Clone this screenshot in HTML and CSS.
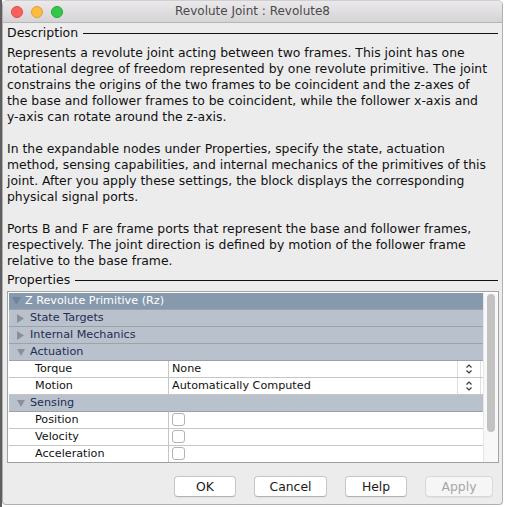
FILE: index.html
```html
<!DOCTYPE html>
<html>
<head>
<meta charset="utf-8">
<link rel="stylesheet" href="styles.css">
</head>
<body>
<div class="window">
  <div class="titlebar">
    <div class="lights">
      <span class="light red"></span><span class="light yellow"></span><span class="light green"></span>
    </div>
    <div class="title">Revolute Joint : Revolute8</div>
    <div></div>
  </div>
  <div class="content">
    <div class="legend">Description</div>
    <div class="desc">
      <p>Represents a revolute joint acting between two frames. This joint has one<br>rotational degree of freedom represented by one revolute primitive. The joint<br>constrains the origins of the two frames to be coincident and the z-axes of<br>the base and follower frames to be coincident, while the follower x-axis and<br>y-axis can rotate around the z-axis.</p>
      <p>In the expandable nodes under Properties, specify the state, actuation<br>method, sensing capabilities, and internal mechanics of the primitives of this<br>joint. After you apply these settings, the block displays the corresponding<br>physical signal ports.</p>
      <p>Ports B and F are frame ports that represent the base and follower frames,<br>respectively. The joint direction is defined by motion of the follower frame<br>relative to the base frame.</p>
    </div>
    <div class="legend props">Properties</div>
    <div class="table">
      <div class="rows">
        <div class="row head"><span class="tri"><svg width="9" height="8" viewBox="0 0 9 8"><path d="M0 0H9L4.5 8Z" fill="#71849a"/></svg></span>Z Revolute Primitive (Rz)</div>
        <div class="row group"><span class="tri"><svg width="7" height="9" viewBox="0 0 7 9"><path d="M0 0L7 4.5L0 9Z" fill="#8b9098"/></svg></span>State Targets</div>
        <div class="row group"><span class="tri"><svg width="7" height="9" viewBox="0 0 7 9"><path d="M0 0L7 4.5L0 9Z" fill="#8b9098"/></svg></span>Internal Mechanics</div>
        <div class="row group"><span class="tri"><svg width="8" height="7" viewBox="0 0 8 7"><path d="M0 0H8L4 7Z" fill="#8b9098"/></svg></span>Actuation</div>
        <div class="row leaf">
          <div class="label">Torque</div>
          <div class="value combo"><span>None</span><span class="spin"><svg width="8" height="12" viewBox="0 0 8 12"><path d="M1.5 4.5L4 2L6.5 4.5M1.5 7.5L4 10L6.5 7.5" fill="none" stroke="#3a3a3a" stroke-width="1.2"/></svg></span></div>
        </div>
        <div class="row leaf">
          <div class="label">Motion</div>
          <div class="value combo"><span>Automatically Computed</span><span class="spin"><svg width="8" height="12" viewBox="0 0 8 12"><path d="M1.5 4.5L4 2L6.5 4.5M1.5 7.5L4 10L6.5 7.5" fill="none" stroke="#3a3a3a" stroke-width="1.2"/></svg></span></div>
        </div>
        <div class="row group"><span class="tri"><svg width="8" height="7" viewBox="0 0 8 7"><path d="M0 0H8L4 7Z" fill="#8b9098"/></svg></span>Sensing</div>
        <div class="row leaf">
          <div class="label">Position</div>
          <div class="value"><span class="check"></span></div>
        </div>
        <div class="row leaf">
          <div class="label">Velocity</div>
          <div class="value"><span class="check"></span></div>
        </div>
        <div class="row leaf">
          <div class="label">Acceleration</div>
          <div class="value"><span class="check"></span></div>
        </div>
      </div>
      <div class="scrollbar"><div class="thumb"></div></div>
    </div>
    <div class="buttons">
      <button class="btn ok">OK</button>
      <button class="btn cancel">Cancel</button>
      <button class="btn help">Help</button>
      <button class="btn apply">Apply</button>
    </div>
  </div>
</div>
</body>
</html>
```
FILE: styles.css
```css
html, body {
  margin: 0;
  height: 507px;
  overflow: hidden;
}
body {
  background: linear-gradient(to right, #5f5f5f 0, #5f5f5f 2px, #ffffff 2px);
  font-family: "DejaVu Sans", "Liberation Sans", sans-serif;
}
.window {
  margin-left: 2px;
  width: 501px;
  height: 505px;
  box-sizing: border-box;
  border: 1px solid #b0b0b0;
  border-top-color: #cfcfcf;
  border-radius: 5px 5px 4px 4px;
  background: #ececec;
  overflow: hidden;
  display: flex;
  flex-direction: column;
}
.titlebar {
  height: 21px;
  border-bottom: 1px solid #b6b6b6;
  background: linear-gradient(#ebe9eb, #d5d3d5);
  display: grid;
  grid-template-columns: 1fr auto 1fr;
  align-items: center;
}
.lights {
  display: flex;
  gap: 8px;
  padding-left: 8px;
  padding-top: 1px;
}
.light {
  width: 12px;
  height: 12px;
  box-sizing: border-box;
  border-radius: 50%;
}
.red { background: #fc605c; border: 1px solid #df4a45; }
.yellow { background: #fdbc40; border: 1px solid #dea034; }
.green { background: #34c84a; border: 1px solid #25a833; }
.title {
  font-size: 12px;
  color: #4a4a4a;
  line-height: 21px;
}
.content {
  padding: 2px 3px 0 4px;
}
.legend {
  display: flex;
  align-items: center;
  height: 16px;
  line-height: 16px;
  font-size: 12.5px;
  color: #111;
}
.legend::after {
  content: "";
  flex: 1;
  height: 1px;
  background: #111;
  margin: 0 1px 0 5px;
}
.desc {
  margin-top: 4px;
  font-size: 12.4px;
  line-height: 16px;
  white-space: nowrap;
  color: #111;
}
.desc p { margin: 0 0 16px; }
.desc p:last-child { margin: 0; }
.props { margin-top: 3px; }
.table {
  margin-top: 3px;
  height: 172px;
  box-sizing: border-box;
  border: 1px solid #a2a2a2;
  background: #fff;
  padding: 1px 0 0 1px;
  display: flex;
}
.rows {
  width: 474px;
  height: 169px;
  overflow: hidden;
}
.row {
  height: 16px;
  border-bottom: 1px solid #9da2a9;
  display: flex;
  align-items: center;
  font-size: 11.2px;
  line-height: 16px;
  white-space: nowrap;
}
.tri {
  width: 13px;
  display: flex;
  align-items: center;
}
.head {
  background: #8699ad;
  color: #fff;
  padding-left: 3px;
}
.group {
  background: #b9c1cc;
  color: #1f2c55;
  padding-left: 8px;
}
.leaf {
  background: #fff;
  border-bottom-color: #c6c6c6;
  color: #111;
}
.leaf .label {
  width: 159px;
  height: 16px;
  box-sizing: content-box;
  padding-left: 26px;
  margin-right: 0;
  border-right: 1px solid #c6c6c6;
  box-sizing: border-box;
  flex: none;
}
.leaf .label { width: 160px; }
.value {
  flex: 1;
  height: 16px;
  padding-left: 3px;
  display: flex;
  align-items: center;
}
.spin {
  margin-left: auto;
  margin-right: 2px;
  width: 24px;
  height: 16px;
  box-sizing: border-box;
  border-left: 1px solid #dedede;
  border-right: 1px solid #dedede;
  display: flex;
  align-items: center;
  justify-content: center;
}
.check {
  width: 13px;
  height: 13px;
  box-sizing: border-box;
  border: 1px solid #b3b3b3;
  border-radius: 3px;
  background: #fff;
  align-self: flex-start;
  margin-top: 1px;
}
.scrollbar {
  width: 15px;
  box-sizing: border-box;
  background: #f8f8f8;
  border-left: 1px solid #e6e6e6;
  padding: 1px 0 0 3px;
}
.thumb {
  width: 8px;
  height: 138px;
  border-radius: 4px;
  background: #c2c2c2;
}
.buttons {
  display: flex;
  justify-content: flex-end;
  gap: 18px;
  margin-top: 13px;
  padding-right: 6px;
}
.btn {
  height: 21px;
  box-sizing: border-box;
  border: 1px solid #c6c6c6;
  border-bottom-color: #b2b2b2;
  border-radius: 4px;
  background: #fff;
  font-family: "DejaVu Sans", "Liberation Sans", sans-serif;
  font-size: 12.4px;
  color: #1a1a1a;
  padding: 0;
  display: flex;
  align-items: center;
  justify-content: center;
  box-shadow: 0 1px 0 rgba(0, 0, 0, 0.04);
}
.ok { width: 62px; }
.cancel { width: 73px; }
.help { width: 62px; }
.apply {
  width: 68px;
  color: #a6a6a6;
  background: #f6f6f6;
  border-color: #d8d8d8;
}
```
